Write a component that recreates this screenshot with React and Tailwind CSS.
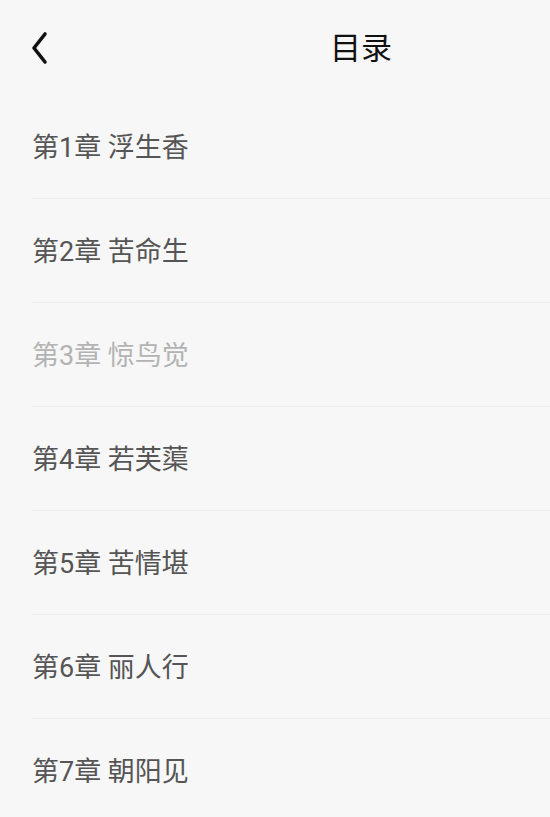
import React from "react";

const chapters = [
  { t: "第1章 浮生香" },
  { t: "第2章 苦命生" },
  { t: "第3章 惊鸟觉", dim: true },
  { t: "第4章 若芙蕖" },
  { t: "第5章 苦情堪" },
  { t: "第6章 丽人行" },
  { t: "第7章 朝阳见" },
];

export default function App() {
  return (
    <div
      className="w-[550px] h-[817px] overflow-hidden bg-[#f7f7f7]"
      style={{ fontFamily: 'Roboto, "Noto Sans CJK SC", sans-serif' }}
    >
      <div className="relative h-[95px] flex items-center">
        <svg
          className="absolute left-[30px] top-[31px]"
          width="20"
          height="34"
          viewBox="0 0 20 34"
          fill="none"
        >
          <path
            d="M15 3 L4 17 L15 31"
            stroke="#111"
            strokeWidth="3.6"
            strokeLinecap="round"
            strokeLinejoin="round"
          />
        </svg>
        <div className="absolute left-[330px] top-[26px] text-[31px] leading-[46px] text-[#111]">
          目录
        </div>
      </div>
      <div className="pl-[32px]">
        {chapters.map((c, i) => (
          <div
            key={i}
            className="h-[104px] flex items-center border-b border-[#ececec]"
          >
            <span
              className={
                "text-[27px] leading-none mt-[4px] " +
                (c.dim ? "text-[#b3b3b3]" : "text-[#555555]")
              }
            >
              {c.t}
            </span>
          </div>
        ))}
      </div>
    </div>
  );
}
